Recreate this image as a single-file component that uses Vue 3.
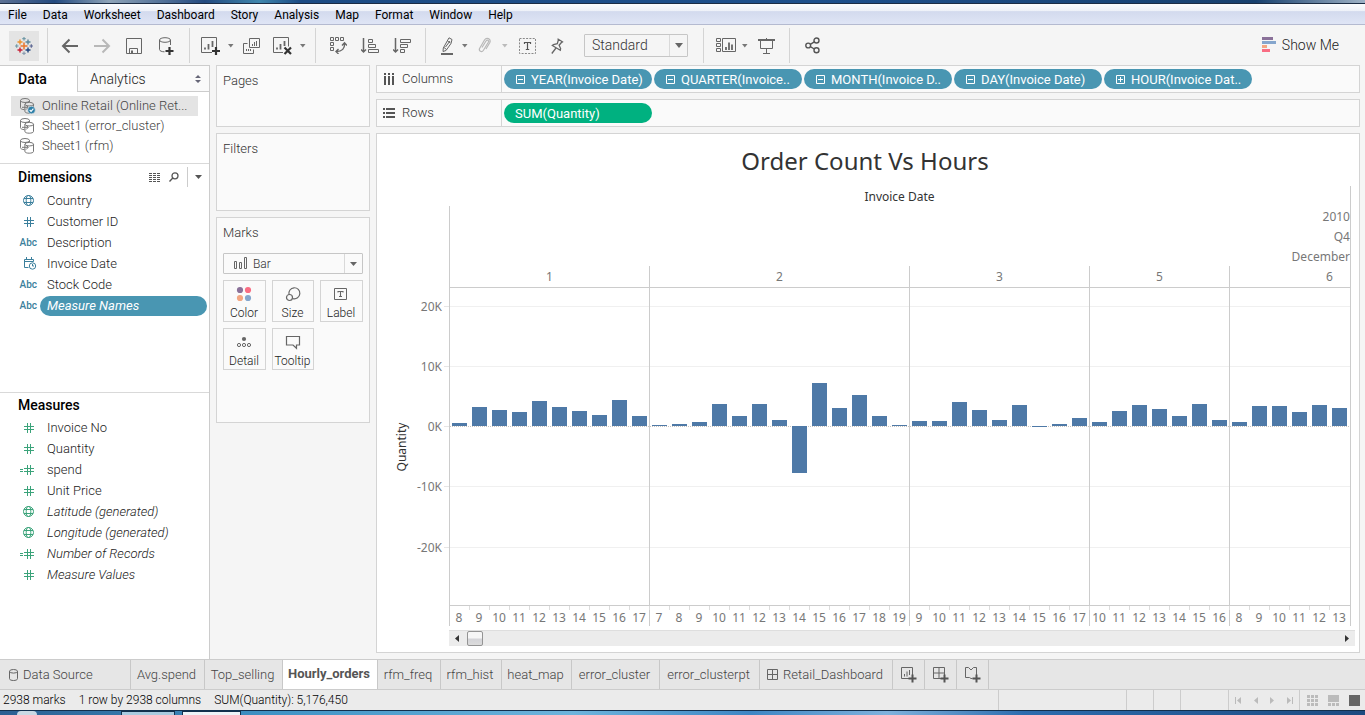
<script setup>
import { ref } from 'vue'

const menus = ['File', 'Data', 'Worksheet', 'Dashboard', 'Story', 'Analysis', 'Map', 'Format', 'Window', 'Help']

const sources = [
  { name: 'Online Retail (Online Ret...', active: true },
  { name: 'Sheet1 (error_cluster)' },
  { name: 'Sheet1 (rfm)' }
]

const dimensions = [
  { name: 'Country', kind: 'geo' },
  { name: 'Customer ID', kind: 'num' },
  { name: 'Description', kind: 'abc' },
  { name: 'Invoice Date', kind: 'date' },
  { name: 'Stock Code', kind: 'abc' },
  { name: 'Measure Names', kind: 'abc', italic: true, selected: true }
]

const measures = [
  { name: 'Invoice No', kind: 'num' },
  { name: 'Quantity', kind: 'num' },
  { name: 'spend', kind: 'calc' },
  { name: 'Unit Price', kind: 'num' },
  { name: 'Latitude (generated)', kind: 'geo', italic: true },
  { name: 'Longitude (generated)', kind: 'geo', italic: true },
  { name: 'Number of Records', kind: 'calc', italic: true },
  { name: 'Measure Values', kind: 'num', italic: true }
]

const fieldGroups = [
  { title: 'Dimensions', fields: dimensions, tools: true },
  { title: 'Measures', fields: measures }
]

const columnPills = [
  { label: 'YEAR(Invoice Date)' },
  { label: 'QUARTER(Invoice..' },
  { label: 'MONTH(Invoice D..' },
  { label: 'DAY(Invoice Date)' },
  { label: 'HOUR(Invoice Dat..', plus: true }
]

const marks = ['Color', 'Size', 'Label', 'Detail', 'Tooltip']

// Quantities are stored in units of 1/60 of the 10K axis interval.
const AXIS_TOP = 138
const AXIS_SPAN = 317
const panes = [
  { day: 1, slots: 10, first: 8, values: [3, 19, 16, 14, 25, 19, 15, 11, 26, 10] },
  { day: 2, slots: 13, first: 7, values: [1, 2, 4, 22, 10, 22, 6, -47, 43, 18, 31, 10, 1] },
  { day: 3, slots: 9, first: 9, values: [5, 5, 24, 16, 6, 21, -1, 2, 8] },
  { day: 5, slots: 7, first: 10, values: [4, 15, 21, 17, 10, 22, 6] },
  { day: 6, slots: 10, first: 8, values: [4, 20, 20, 14, 21, 18] }
]
const gridLines = [18, 78, 198, 259]
const ticks = [
  { label: '20K', at: 18 },
  { label: '10K', at: 78 },
  { label: '0K', at: 138 },
  { label: '-10K', at: 198 },
  { label: '-20K', at: 259 }
]

const sheets = [
  { name: 'Avg.spend', width: 74 },
  { name: 'Top_selling', width: 78 },
  { name: 'Hourly_orders', width: 95, active: true },
  { name: 'rfm_freq', width: 63 },
  { name: 'rfm_hist', width: 61 },
  { name: 'heat_map', width: 70 },
  { name: 'error_cluster', width: 88 },
  { name: 'error_clusterpt', width: 100 },
  { name: 'Retail_Dashboard', width: 133, dashboard: true }
]

const fit = ref('Standard')
const mark = ref('Bar')
const scroll = ref(0)
</script>

<template>
  <div class="app">
    <div class="frame-top"></div>
    <nav class="menubar">
      <button v-for="m in menus" :key="m" class="menu">{{ m }}</button>
    </nav>

    <header class="toolbar">
      <div class="group g-logo">
        <button class="logo" aria-label="Start page">
          <svg width="18" height="18" viewBox="0 0 18 18" fill="none" stroke-width="1.2">
            <path d="M9 5.5v7M5.500 9h7" stroke="#e8762c" stroke-width="1.5" />
            <path d="M5 2.500v5M2.500 5h5" stroke="#eb912b" stroke-width="1.4" />
            <path d="M13 2.500v5M10.500 5h5" stroke="#5b879b" stroke-width="1.4" />
            <path d="M5 10.500v5M2.500 13h5" stroke="#c72035" stroke-width="1.4" />
            <path d="M13 10.500v5M10.500 13h5" stroke="#1f447e" stroke-width="1.4" />
            <path d="M9 0v3.500M7.300 1.700h3.400" stroke="#7099a6" />
            <path d="M9 14.500V18M7.300 16.300h3.400" stroke="#8a9bb0" />
            <path d="M1.700 7.300v3.400M0 9h3.500" stroke="#7099a6" />
            <path d="M16.300 7.300v3.400M14.500 9H18" stroke="#5c6692" />
          </svg>
        </button>
      </div>
      <div class="group g-file">
        <button class="tool" aria-label="Undo">
          <svg width="18" height="16" viewBox="0 0 18 16" fill="none" stroke="#666" stroke-width="2"><path d="M17 8H2M8.500 1.500L2 8l6.500 6.500" /></svg>
        </button>
        <button class="tool" aria-label="Redo">
          <svg width="18" height="16" viewBox="0 0 18 16" fill="none" stroke="#b8b8b8" stroke-width="2"><path d="M1 8h15M9.500 1.500L16 8l-6.500 6.500" /></svg>
        </button>
        <button class="tool" aria-label="Save">
          <svg width="16" height="16" viewBox="0 0 16 16" fill="none" stroke="#666"><path d="M.5.500h15v15H.5zM3.500 15.500v-5h8v5" /><path d="M5 12.500h2v3H5z" fill="#666" stroke="none" /></svg>
        </button>
        <button class="tool" aria-label="New data source">
          <svg width="16" height="18" viewBox="0 0 16 18" fill="none" stroke="#666"><ellipse cx="7" cy="3" rx="5.500" ry="2.300" /><path d="M1.500 3v9.500c0 1.500 2.500 2.300 5 2.300M12.500 3v5" /><path d="M11.500 10v8M7.500 14h8" stroke="#333" stroke-width="2.200" /></svg>
        </button>
      </div>
      <div class="group g-sheet">
        <button class="tool" aria-label="New worksheet">
          <svg width="19" height="18" viewBox="0 0 19 18" fill="none" stroke="#666"><path d="M11 15.500H.5V.5h15v10" /><path d="M4 12.500v-2M7.500 12.500V7M11.500 10V4" stroke-width="1.800" /><path d="M15 10v8M11 14h8" stroke="#333" stroke-width="2.200" /></svg>
        </button>
        <button class="caret" aria-label="New options"><svg width="6" height="4" viewBox="0 0 6 4"><path d="M0 0h5.500L2.800 3.500z" fill="#777" /></svg></button>
        <button class="tool mid" aria-label="Duplicate">
          <svg width="17" height="16" viewBox="0 0 17 16" fill="none" stroke="#666"><path d="M6.500.5h10v9h-10zM4.500 5.500h-4v10h10v-4" /><path d="M9.500 8V6M11.500 8V4M13.500 8V3M3.500 13v-2M5.500 13v-2M7.500 13v-2" /></svg>
        </button>
        <button class="tool" aria-label="Clear sheet">
          <svg width="19" height="18" viewBox="0 0 19 18" fill="none" stroke="#666"><path d="M10 15.500H.5V.5h15v9" /><path d="M4 12.500v-2M7.500 12.500V7M11.500 9V4" stroke-width="1.800" /><path d="M11.500 10.500l6.500 6.500M18 10.500L11.500 17" stroke="#333" stroke-width="2.200" /></svg>
        </button>
        <button class="caret" aria-label="Clear options"><svg width="6" height="4" viewBox="0 0 6 4"><path d="M0 0h5.500L2.800 3.500z" fill="#777" /></svg></button>
      </div>
      <div class="group g-sort">
        <button class="tool" aria-label="Swap rows and columns">
          <svg width="17" height="17" viewBox="0 0 17 17" fill="none" stroke="#666"><path d="M.5.500h3v3h-3zM5.500.5h3v3h-3zM10.500.5h3v3h-3zM.5 5.500h3v3h-3zM.5 10.500h3v3h-3z" /><path d="M14.500 6.500c.5 5-2.500 8-8 8M12 8.500l2.500-2.700L17 8.500M8.500 12L6 14.500 8.500 17" stroke-width="1.400" /></svg>
        </button>
        <button class="tool" aria-label="Sort ascending">
          <svg width="18" height="16" viewBox="0 0 18 16" fill="none" stroke="#666"><path d="M2.500 0v14M0 11.500l2.500 2.500L5 11.500" stroke-width="1.500" /><path d="M7.500 1.500h4v3h-4zM7.500 6.500h7v3h-7zM7.500 11.500h10v3h-10z" /></svg>
        </button>
        <button class="tool" aria-label="Sort descending">
          <svg width="18" height="16" viewBox="0 0 18 16" fill="none" stroke="#666"><path d="M2.500 0v14M0 11.500l2.500 2.500L5 11.500" stroke-width="1.500" /><path d="M7.500 1.500h10v3h-10zM7.500 6.500h7v3h-7zM7.500 11.500h4v3h-4z" /></svg>
        </button>
      </div>
      <div class="group g-format">
        <button class="tool small" aria-label="Highlight">
          <svg width="13" height="18" viewBox="0 0 13 18" fill="none" stroke="#666"><path d="M8 .8l3 1.700-1 4-5 7-3 1 .3-3.500zM3 10.500l2.500 2M6.500 4l3 2" /><path d="M4.500 10l4.500-6" /><path d="M0 17h12" stroke-width="2" /></svg>
        </button>
        <button class="caret" aria-label="Highlight options"><svg width="6" height="4" viewBox="0 0 6 4"><path d="M0 0h5.500L2.800 3.500z" fill="#777" /></svg></button>
        <button class="tool mid" aria-label="Group members">
          <svg width="14" height="17" viewBox="0 0 14 17" fill="none" stroke="#b8b8b8" stroke-width="1.200"><path d="M4 10.500l4-6.500c1.200-1.700 3.300-.5 2.300 1.300l-5 8.200c-1.500 2.200-5 .5-3.600-2.200L6.500 3c2-3.300 7-1.200 5.200 2.800L8 12" /></svg>
        </button>
        <button class="caret" aria-label="Group options"><svg width="6" height="4" viewBox="0 0 6 4"><path d="M0 0h5.500L2.800 3.500z" fill="#bbb" /></svg></button>
        <button class="tool wide" aria-label="Show mark labels">
          <svg width="17" height="16" viewBox="0 0 17 16" fill="none" stroke="#888"><path d="M.5.500h16v15H.5z" stroke-dasharray="2 1.300" /><path d="M5.500 6V4.500h6V6M8.500 4.500v7M6.800 11.500h3.400" stroke="#555" stroke-width="1.200" /></svg>
        </button>
        <button class="tool small" aria-label="Fix axes">
          <svg width="13" height="16" viewBox="0 0 13 16" fill="none" stroke="#666" stroke-width="1.300"><path d="M6.500.8l5.700 3.400M7.500 1.500L6.300 5.700 2.500 6.500l-1.200 1 8 4.700.3-1.700-1.500-3.300 3-3.400M5 10L.8 15.500" /></svg>
        </button>
        <label class="fit">
          <select v-model="fit" aria-label="Fit"><option>Standard</option><option>Entire View</option></select>
          <svg width="8" height="5" viewBox="0 0 8 5"><path d="M0 0h8L4 5z" fill="#666" /></svg>
        </label>
      </div>
      <div class="group g-view">
        <button class="tool view" aria-label="Show or hide cards">
          <svg width="20" height="15" viewBox="0 0 20 15" fill="none" stroke="#666"><path d="M.5.500h4v3h-4zM.5 5.500h4v3h-4zM.5 10.500h4v3h-4zM6.500.5h13v13h-13z" /><path d="M10 12V9M13 12V4.500M16 12V6.500" stroke-width="1.800" /></svg>
        </button>
        <button class="caret" aria-label="Card options"><svg width="6" height="4" viewBox="0 0 6 4"><path d="M0 0h5.500L2.800 3.500z" fill="#777" /></svg></button>
        <button class="tool" aria-label="Presentation mode">
          <svg width="17" height="16" viewBox="0 0 17 16" fill="none" stroke="#666"><path d="M0 2h17" stroke-width="2" /><path d="M2.500 2v8.500h12V2M8.500 0v2M8.500 10.500v5M5 15.500h7" /></svg>
        </button>
      </div>
      <div class="group g-share">
        <button class="tool view" aria-label="Share">
          <svg width="15" height="17" viewBox="0 0 15 17" fill="none" stroke="#555" stroke-width="1.400"><circle cx="3.200" cy="8.500" r="2.400" /><circle cx="11.500" cy="3.500" r="2.500" /><circle cx="11.500" cy="13.300" r="2.500" /><path d="M5.300 7.300l4-2.500M5.300 9.700l4 2.300" /></svg>
        </button>
      </div>
      <button class="showme">
        <svg width="14" height="15" viewBox="0 0 14 15"><path d="M0 0h11v3H0z" fill="#8a7199" /><path d="M0 4h14v3H0z" fill="#85a6cd" /><path d="M0 8h5v3H0z" fill="#f3a682" /><path d="M0 12h8v3H0z" fill="#f96d83" /></svg>
        Show Me
      </button>
    </header>

    <main class="workspace">
      <aside class="sidebar">
        <div class="side-tabs">
          <button class="side-tab on">Data</button>
          <button class="side-tab off">Analytics
            <svg width="6" height="8" viewBox="0 0 6 8"><path d="M0 3h6L3 0zM0 5h6L3 8z" fill="#667" /></svg>
          </button>
        </div>
        <ul class="sources">
          <li v-for="s in sources" :key="s.name" :class="{ active: s.active }">
            <svg width="17" height="16" viewBox="0 0 17 16" fill="none" stroke="#777">
              <ellipse cx="6" cy="2.500" rx="4.500" ry="2" /><path d="M1.500 2.500v7.200c0 1 1.500 1.800 4 2M10.500 2.500V4" />
              <ellipse cx="10.200" cy="6.200" rx="4.300" ry="1.800" /><path d="M5.900 6.200v7.200c0 2.400 8.600 2.400 8.600 0V6.200M3 9.300h6M7 7l2.300 2.300L7 11.600" />
              <g v-if="s.active"><circle cx="12.500" cy="12" r="3.800" fill="#2c7fa8" stroke="#e6e6e6" stroke-width=".6" /><path d="M10.700 12l1.400 1.400 2.300-2.700" stroke="#fff" stroke-width="1.100" /></g>
            </svg>
            {{ s.name }}
          </li>
        </ul>
        <section v-for="g in fieldGroups" :key="g.title" class="fields" :class="g.tools ? 'dims' : 'meas'">
          <div class="fields-head">
            <h2>{{ g.title }}</h2>
            <template v-if="g.tools">
              <button class="plain" aria-label="View data"><svg width="12" height="9" viewBox="0 0 12 9" stroke="#555" stroke-dasharray="3 1"><path d="M0 .5h12M0 2.500h12M0 4.500h12M0 6.500h12M0 8.500h12" /></svg></button>
              <button class="plain" aria-label="Find field"><svg width="10" height="10" viewBox="0 0 10 10" fill="none" stroke="#555" stroke-width="1.300"><circle cx="6" cy="3.800" r="3" /><path d="M3.800 6L.5 9.500" /></svg></button>
              <button class="plain more" aria-label="Pane options"><svg width="7" height="4" viewBox="0 0 7 4"><path d="M0 0h7L3.500 4z" fill="#555" /></svg></button>
            </template>
          </div>
          <ul>
            <li v-for="f in g.fields" :key="f.name" :class="{ italic: f.italic, selected: f.selected }">
              <span class="kind" :class="f.kind">
                <template v-if="f.kind === 'abc'">Abc</template>
                <svg v-else-if="f.kind === 'geo'" width="11" height="11" viewBox="0 0 11 11" fill="none" stroke="currentColor"><circle cx="5.500" cy="5.500" r="5" /><ellipse cx="5.500" cy="5.500" rx="2.300" ry="5" /><path d="M1 3.500h9M1 7.500h9" /></svg>
                <svg v-else-if="f.kind === 'date'" width="14" height="13" viewBox="0 0 14 13" fill="none" stroke="currentColor"><path d="M5.500 10.500h-4v-8h9v2M1 4.500h9.500M3.500 0v3M8.500 0v3" /><circle cx="9.500" cy="9" r="3.200" /><path d="M9.500 7v2h1.500" /></svg>
                <svg v-else width="14" height="10" viewBox="0 0 14 10" fill="none" stroke="currentColor"><path d="M7.500 0v10M10.500 0v10M4 3.500h10M4 6.500h10" /><path v-if="f.kind === 'calc'" d="M0 4.500h3M0 6.500h3" /></svg>
              </span>
              <span class="name">{{ f.name }}</span>
            </li>
          </ul>
        </section>
      </aside>

      <div class="cards">
        <section class="card pages"><h3>Pages</h3></section>
        <section class="card filters"><h3>Filters</h3></section>
        <section class="card marks">
          <h3>Marks</h3>
          <label class="mark-type">
            <svg class="bars" width="13" height="12" viewBox="0 0 13 12" fill="none" stroke="#666"><path d="M.5 4.500h2v7h-2zM5.500 5.500h2v6h-2zM10.500.5h2v11h-2z" /></svg>
            <select v-model="mark" aria-label="Mark type"><option>Bar</option><option>Line</option></select>
            <svg class="arrow" width="7" height="4" viewBox="0 0 7 4"><path d="M0 0h7L3.500 4z" fill="#666" /></svg>
          </label>
          <div class="mark-grid">
            <button v-for="m in marks" :key="m">
              <svg v-if="m === 'Color'" width="16" height="16" viewBox="0 0 16 16"><circle cx="4" cy="4" r="3.100" fill="#8a7199" /><circle cx="12" cy="4" r="3.100" fill="#f96d83" /><circle cx="4" cy="12" r="3.100" fill="#f3a682" /><circle cx="12" cy="12" r="3.100" fill="#85a6cd" /></svg>
              <svg v-else-if="m === 'Size'" width="16" height="16" viewBox="0 0 16 16" fill="none" stroke="#666" stroke-width="1.200"><path d="M4 8.500A5.500 5.500 0 1 1 8 12.600" /><circle cx="4.500" cy="11.500" r="3" /></svg>
              <svg v-else-if="m === 'Label'" width="16" height="16" viewBox="0 0 16 16" fill="none" stroke="#666"><path d="M1.500 2.500h12v11h-12z" /><path d="M5 6.500v-1h5v1M7.500 5.500v5M6 10.500h3" stroke-width="1.100" /></svg>
              <svg v-else-if="m === 'Detail'" width="16" height="16" viewBox="0 0 16 16" fill="none" stroke="#666"><circle cx="8" cy="5" r="2.100" fill="#666" stroke="none" /><circle cx="3" cy="11" r="1.600" /><circle cx="8" cy="11" r="1.600" /><circle cx="13" cy="11" r="1.600" /></svg>
              <svg v-else width="16" height="16" viewBox="0 0 16 16" fill="none" stroke="#666" stroke-width="1.200"><path d="M1.500 2.500h13v8.500h-3v3.300L8 11H1.500z" /></svg>
              {{ m }}
            </button>
          </div>
        </section>
      </div>

      <div class="stage">
        <div class="shelf">
          <div class="shelf-label">
            <svg width="12" height="12" viewBox="0 0 12 12" stroke="#555" stroke-width="2"><path d="M2 0v2M6 0v2M10 0v2M2 3v9M6 3v9M10 3v9" /></svg>Columns
          </div>
          <div class="pills">
            <button v-for="p in columnPills" :key="p.label" class="pill">
              <svg width="9" height="9" viewBox="0 0 9 9" fill="none" stroke="#fff"><path d="M.5.500h8v8h-8zM2 4.500h5" /><path v-if="p.plus" d="M4.500 2v5" /></svg>{{ p.label }}
            </button>
          </div>
        </div>
        <div class="shelf">
          <div class="shelf-label">
            <svg width="12" height="10" viewBox="0 0 12 10" stroke="#555" stroke-width="2"><path d="M0 1h2M0 5h2M0 9h2M3 1h9M3 5h9M3 9h9" /></svg>Rows
          </div>
          <div class="pills"><button class="pill green">SUM(Quantity)</button></div>
        </div>

        <section class="viz">
          <h1>Order Count Vs Hours</h1>
          <div class="chart">
            <div class="axis">
              <div class="axis-head"></div>
              <div class="axis-body">
                <span class="axis-title">Quantity</span>
                <span v-for="t in ticks" :key="t.label" class="tick" :style="{ top: (t.at / AXIS_SPAN) * 100 + '%' }">{{ t.label }}</span>
              </div>
              <div class="axis-foot"></div>
            </div>
            <div class="table">
              <div class="field-name">Invoice Date</div>
              <div class="table-body">
                <div class="span-row">2010</div>
                <div class="span-row">Q4</div>
                <div class="span-row">December</div>
                <div class="panes">
                  <div v-for="p in panes" :key="p.day" class="pane" :style="{ width: p.slots * 20 + 'px' }">
                    <div class="day">{{ p.day }}</div>
                    <div class="plot">
                      <svg :viewBox="`0 0 ${p.slots * 20 - 1} ${AXIS_SPAN}`" preserveAspectRatio="none" shape-rendering="crispEdges">
                        <path v-for="g in gridLines" :key="g" :d="`M0 ${g + 0.5}H${p.slots * 20}`" stroke="#f0f0f0" />
                        <path :d="`M0 ${AXIS_TOP + 0.5}H${p.slots * 20}`" stroke="#c9c5c1" stroke-dasharray="1 1" />
                        <rect v-for="(v, i) in p.values" :key="i" :x="2 + i * 20" :y="v > 0 ? AXIS_TOP - v : AXIS_TOP" width="15" :height="Math.abs(v)" fill="#4e79a7" />
                      </svg>
                    </div>
                    <div class="hours">
                      <span v-for="(v, i) in p.values" :key="i">{{ p.first + i }}</span>
                    </div>
                  </div>
                </div>
              </div>
            </div>
          </div>
          <div class="scroller">
            <svg width="4" height="7" viewBox="0 0 4 7"><path d="M4 0v7L0 3.500z" fill="#333" /></svg>
            <input v-model="scroll" type="range" min="0" max="100" aria-label="Scroll chart" />
            <svg width="4" height="7" viewBox="0 0 4 7"><path d="M0 0v7l4-3.500z" fill="#333" /></svg>
          </div>
        </section>
      </div>
    </main>

    <div class="sheets">
      <button class="sheet source">
        <svg width="9" height="12" viewBox="0 0 9 12" fill="none" stroke="#666"><ellipse cx="4.500" cy="2.300" rx="4" ry="1.800" /><path d="M.5 2.300v7.400c0 2.400 8 2.400 8 0V2.300" /></svg>Data Source
      </button>
      <button v-for="s in sheets" :key="s.name" class="sheet" :class="{ active: s.active }" :style="{ width: s.width + 'px' }">
        <svg v-if="s.dashboard" width="11" height="11" viewBox="0 0 11 11" fill="none" stroke="#666"><path d="M.5.500h10v10H.5zM5.500.5v10M.5 5.500h10" /></svg>{{ s.name }}
      </button>
      <button class="sheet add" aria-label="New worksheet">
        <svg width="16" height="16" viewBox="0 0 16 16" fill="none" stroke="#666"><path d="M8 11.500H.5V.5h11V8" /><path d="M3.500 9.500V7M6 9.500V4.500M8.500 8V3" /><path d="M11.500 7.500v8M7.500 11.500h8" stroke="#555" stroke-width="2" /></svg>
      </button>
      <button class="sheet add" aria-label="New dashboard">
        <svg width="16" height="16" viewBox="0 0 16 16" fill="none" stroke="#666"><path d="M8 11.500H.5V.5h11V8M6 .5v11M.5 6h11" /><path d="M11.500 7.500v8M7.500 11.500h8" stroke="#555" stroke-width="2" /></svg>
      </button>
      <button class="sheet add" aria-label="New story">
        <svg width="16" height="16" viewBox="0 0 16 16" fill="none" stroke="#666"><path d="M7.500 11.500H6L4.500 10.500H.5V.5h3L6 3 8.500.5h3V8" /><path d="M11.500 7.500v8M7.500 11.500h8" stroke="#555" stroke-width="2" /></svg>
      </button>
    </div>

    <footer class="status">
      <span>2938 marks</span><span>1 row by 2938 columns</span><span>SUM(Quantity): 5,176,450</span>
      <div class="cells"><i class="c1"></i><i></i><i></i><i class="c2"></i></div>
      <div class="pager">
        <button aria-label="First"><svg width="7" height="7" viewBox="0 0 7 7" fill="#bbb"><path d="M0 0h1v7H0zM6 0v7L2 3.500z" /></svg></button>
        <button aria-label="Previous"><svg width="4" height="7" viewBox="0 0 4 7" fill="#bbb"><path d="M4 0v7L0 3.500z" /></svg></button>
        <button aria-label="Next"><svg width="4" height="7" viewBox="0 0 4 7" fill="#bbb"><path d="M0 0v7l4-3.500z" /></svg></button>
        <button aria-label="Last"><svg width="7" height="7" viewBox="0 0 7 7" fill="#bbb"><path d="M6 0h1v7H6zM1 0v7l4-3.500z" /></svg></button>
      </div>
      <div class="modes">
        <button aria-label="Sheet sorter"><svg width="11" height="11" viewBox="0 0 11 11" fill="#bbb"><path d="M0 0h3v3H0zM4 0h3v3H4zM8 0h3v3H8zM0 4h3v3H0zM4 4h3v3H4zM8 4h3v3H8zM0 8h3v3H0zM4 8h3v3H4zM8 8h3v3H8z" /></svg></button>
        <button aria-label="Filmstrip"><svg width="11" height="11" viewBox="0 0 11 11" fill="#bbb"><path d="M0 0h11v7H0zM0 8h3v3H0zM4 8h3v3H4zM8 8h3v3H8z" /></svg></button>
        <button aria-label="Tabs"><svg width="11" height="11" viewBox="0 0 11 11" fill="#666"><path d="M0 0h11v11H0z" /></svg></button>
      </div>
    </footer>
    <div class="taskbar"><i class="orb"></i><i class="task"></i><i class="task wide"></i></div>
  </div>
</template>

<style>
body { margin: 0; }
</style>

<style scoped>
* { box-sizing: border-box; }
.app { display: flex; flex-direction: column; min-height: 100vh; background: #f5f5f5; font-family: Roboto, "Liberation Sans", sans-serif; font-size: 13px; font-weight: 300; color: #222; overflow: hidden; }
button, select { font: inherit; color: inherit; background: none; border: 0; padding: 0; margin: 0; white-space: nowrap; }
ul { list-style: none; margin: 0; padding: 0; }
h1, h2, h3 { margin: 0; font-weight: 300; font-size: 13px; }
svg { flex: none; display: block; }

.frame-top { height: 4px; background: linear-gradient(90deg, #5a6f94, #234a80 4%, #8ea3b8 8%, #234a80 15%, #3f86ad 19%, #1d4c85 22%, #1d4f8c 60%, #17406f 92%, #9fb2c6); border-bottom: 1px solid #1b2c45; }
.menubar { display: flex; height: 21px; border-bottom: 1px solid #b4bad0; background: linear-gradient(#fbfcfe 0, #eef1f8 34%, #d3daee 38%, #dfe5f5 100%); font-size: 12px; font-weight: 400; color: #000; }
.menu { padding: 0 8px; line-height: 22px; }

.toolbar { display: flex; height: 40px; padding: 3px 0 2px; align-items: stretch; }
.group { display: flex; align-items: center; border-right: 1px solid #d4d4d4; }
.g-logo { width: 48px; padding-left: 9px; }
.logo { width: 30px; height: 30px; background: #e4e4e4; display: grid; place-items: center; }
.g-file { width: 142px; padding-left: 6px; }
.g-sheet { width: 126px; padding-left: 4px; }
.g-sort { width: 110px; padding-left: 6px; }
.g-format { width: 278px; padding-left: 8px; }
.g-view { width: 86px; padding-left: 8px; }
.g-share { padding-left: 8px; border: 0; }
.tool { width: 32px; height: 30px; display: grid; place-items: center; }
.tool.small { width: 26px; }
.tool.view { width: 28px; }
.tool.mid { width: 30px; }
.tool.wide { width: 34px; }
.caret { width: 10px; height: 30px; display: grid; place-items: center; }
.fit { position: relative; margin-left: 14px; width: 104px; }
.fit select { appearance: none; display: block; width: 100%; height: 23px; padding: 0 0 2px 7px; border: 1px solid #c6c6c6; border-radius: 1px; background: linear-gradient(#d9d9d9, #d9d9d9) no-repeat right 17px top / 1px 100%; font-size: 14px; color: #333; }
.fit svg { position: absolute; right: 5px; top: 9px; pointer-events: none; }
.showme { display: flex; align-items: center; gap: 6px; margin-left: auto; padding: 0 26px 2px 0; font-size: 14px; }

.workspace { flex: 1; display: flex; min-height: 0; }
.sidebar { width: 210px; flex: none; background: #fff; border-top: 1px solid #ccc; border-right: 1px solid #ccc; }
.side-tabs { display: flex; height: 26px; }
.side-tab { font-size: 14px; line-height: 24px; }
.on { width: 77px; padding-left: 18px; text-align: left; font-weight: 500; color: #000; }
.off { flex: 1; display: flex; align-items: center; justify-content: space-between; padding: 0 8px 0 12px; border-left: 1px solid #ccc; border-bottom: 1px solid #ccc; background: #fafafa; }
.sources { height: 71px; padding: 4px 11px 6px; }
.sources li { display: flex; align-items: center; gap: 6px; height: 20px; padding: 0 0 1px 8px; color: #444; white-space: nowrap; }
.sources li.active { background: #e4e4e4; }
.fields { border-top: 1px solid #d9d9d9; }
.dims { height: 229px; }
.fields-head { display: flex; align-items: center; height: 26px; padding: 0 7px 0 18px; }
.fields-head h2 { flex: 1; font-weight: 500; font-size: 14px; color: #000; }
.meas .fields-head { height: 24px; padding-bottom: 1px; }
.plain { margin-left: 8px; height: 20px; display: grid; place-items: center; }
.more { padding-left: 7px; border-left: 1px solid #ccc; }
.fields li { display: flex; align-items: center; height: 21px; }
.kind { width: 40px; padding-right: 6px; display: flex; justify-content: flex-end; font-size: 10px; font-weight: 500; color: #3b7f9c; }
.kind.abc { padding-right: 3px; }
.kind.date { padding-right: 3px; }
.meas .kind { color: #3ba37a; }
.name { flex: 1; height: 20px; line-height: 20px; padding-left: 7px; margin-right: 2px; border-radius: 10px; white-space: nowrap; }
.italic .name { font-style: italic; }
.selected .name { background: #4996b2; color: #fff; font-weight: 400; }

.cards { width: 154px; flex: none; margin-left: 6px; display: flex; flex-direction: column; gap: 6px; }
.card { border: 1px solid #d4d4d4; background: #fafafa; padding: 6px; }
.card h3 { color: #333; line-height: 18px; }
.pages { height: 62px; }
.filters { height: 78px; }
.marks { height: 206px; }
.mark-type { position: relative; display: block; margin-top: 11px; }
.mark-type select { appearance: none; display: block; width: 100%; height: 21px; padding-left: 29px; border: 1px solid #c6c6c6; border-radius: 1px; color: #333; font-size: 12px; background: linear-gradient(#d9d9d9, #d9d9d9) no-repeat right 17px top / 1px 100%; }
.mark-type .bars { position: absolute; left: 11px; top: 4px; }
.mark-type .arrow { position: absolute; right: 6px; top: 9px; }
.mark-grid { display: grid; grid-template-columns: 43px 42px 43px; grid-auto-rows: 42px; gap: 6px; margin-top: 6px; }
.mark-grid button { display: flex; flex-direction: column; align-items: center; justify-content: flex-end; gap: 3px; padding-right: 1px; border: 1px solid #d4d4d4; font-size: 12px; line-height: 16px; }

.stage { flex: 1; min-width: 0; margin: 0 5px 6px 6px; display: flex; flex-direction: column; gap: 6px; }
.shelf { display: flex; height: 28px; border: 1px solid #d4d4d4; background: #fafafa; overflow: hidden; }
.shelf-label { width: 125px; display: flex; align-items: center; gap: 7px; padding: 0 0 1px 6px; border-right: 1px solid #d4d4d4; color: #333; }
.pills { display: flex; align-items: center; gap: 2px; padding-left: 2px; }
.pill { display: flex; align-items: center; gap: 6px; width: 148px; height: 20px; padding-left: 12px; border-radius: 10px; background: #4996b2; color: #fff; font-size: 13px; font-weight: 400; }
.pill.green { background: #00b180; padding-left: 11px; }

.viz { flex: 1; min-height: 0; display: flex; flex-direction: column; padding: 0 8px 6px 0; border: 1px solid #d4d4d4; background: #fff; font-family: "Noto Sans", "Open Sans", sans-serif; font-weight: 400; }
.viz h1 { height: 52px; line-height: 54px; padding-left: 2px; text-align: center; font-size: 24px; font-weight: 400; color: #333; }
.chart { flex: 1; display: flex; min-height: 0; }
.axis { width: 72px; flex: none; display: flex; flex-direction: column; }
.axis-head { height: 102px; }
.axis-body { flex: 1; position: relative; color: #777; }
.axis-foot { height: 21px; }
.axis-title { position: absolute; left: 24px; top: 50%; transform: translate(-50%, -50%) rotate(-90deg); font-size: 12px; color: #333; }
.tick { position: absolute; right: 0; padding-right: 7px; line-height: 18px; margin-top: -8px; font-size: 12px; background: linear-gradient(#e6e6e6, #e6e6e6) no-repeat right 8px / 5px 1px; }
.table { flex: 1; min-width: 0; display: flex; flex-direction: column; border-right: 1px solid #ccc; }
.field-name { height: 20px; line-height: 22px; text-align: center; font-size: 12px; color: #333; }
.table-body { flex: 1; min-height: 0; display: flex; flex-direction: column; border-left: 1px solid #ccc; overflow: hidden; }
.span-row { height: 20px; line-height: 22px; text-align: right; font-size: 12px; color: #777; }
.panes { flex: 1; min-height: 0; display: flex; margin-left: -1px; }
.pane { flex: none; display: flex; flex-direction: column; border-left: 1px solid #ccc; }
.day { height: 22px; line-height: 22px; border-bottom: 1px solid #ccc; text-align: center; font-size: 12px; color: #777; }
.plot { flex: 1; min-height: 0; position: relative; }
.plot svg { position: absolute; inset: 0; width: 100%; height: 100%; }
.hours { height: 21px; display: flex; border-top: 1px solid #ccc; margin-left: -1px; }
.hours span { width: 20px; flex: none; text-align: center; line-height: 24px; font-size: 12px; color: #777; background: linear-gradient(#ddd, #ddd) no-repeat 0 0 / 1px 4px; }
.scroller { display: flex; align-items: center; gap: 14px; height: 16px; margin: 4px -4px 0 72px; padding: 0 6px; background: #ececec; border-top: 1px solid #dedede; }
.scroller input { appearance: none; flex: 1; min-width: 0; margin: 0 0 0 -6px; height: 15px; background: none; }
.scroller input::-webkit-slider-thumb { appearance: none; width: 16px; height: 15px; border: 1px solid #949494; border-radius: 2px; background: linear-gradient(#f6f6f6 45%, #d4d4d8 55%, #dcdcdc); }

.sheets { display: flex; height: 31px; border-top: 1px solid #ccc; border-bottom: 1px solid #ccc; background: #e6e6e6; color: #444; }
.sheet { display: flex; align-items: center; justify-content: center; gap: 5px; padding-right: 2px; border-right: 1px solid #c8c8c8; }
.source { width: 131px; justify-content: flex-start; padding-left: 9px; }
.sheet.active { background: #fff; font-weight: 700; color: #555; padding: 0 2px 2px 0; }
.sheet.add { width: 32px; padding: 0; }

.status { display: flex; align-items: center; height: 20px; background: #ebebeb; font-size: 12px; color: #000; white-space: nowrap; }
.status span { margin: 0 10px 0 3px; }
.cells { display: flex; align-self: stretch; margin-left: auto; }
.cells i { width: 27px; border-left: 1px solid #ccc; }
.cells .c1 { width: 128px; }
.cells .c2 { width: 48px; }
.pager, .modes { display: flex; align-items: center; align-self: stretch; border-left: 1px solid #ccc; }
.pager { width: 71px; justify-content: space-around; }
.modes { width: 66px; gap: 10px; justify-content: flex-end; padding-right: 5px; }
.taskbar { display: flex; gap: 4px; height: 5px; padding-left: 17px; border-top: 1px solid #12304d; background: linear-gradient(90deg, #2b5f92, #3f93c5 20%, #6db4dc 42%, #3e86c4 55%, #7fb2dd 65%, #2c6cae 75%, #1d4a80); }
.orb { width: 20px; background: #c9d9e4; border-radius: 10px 10px 0 0; }
.task { width: 54px; margin-left: 80px; background: #a9cbe0; border: 1px solid #12304d; border-bottom: 0; }
.task.wide { width: 59px; margin-left: 3px; background: #eef4f8; }
</style>
